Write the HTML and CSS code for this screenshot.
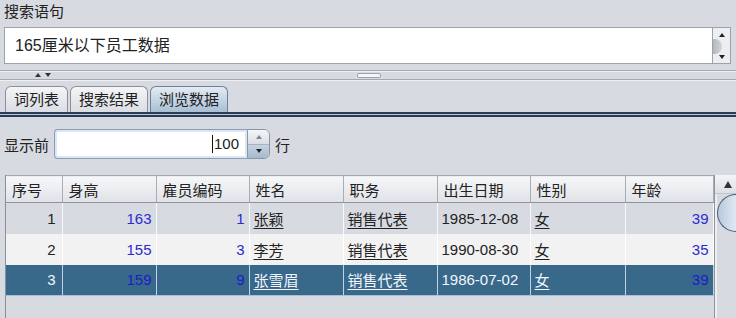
FILE: index.html
```html
<!DOCTYPE html>
<html lang="zh-CN">
<head>
  <meta charset="UTF-8">
  <title>浏览数据</title>
  <link rel="stylesheet" href="styles.css">
</head>
<body>
  <div class="app">
    <div class="field-label">搜索语句</div>
    <div class="query-box">
      <div class="query-text">165厘米以下员工数据</div>
      <div class="mini-scroll">
        <span class="tri up"></span>
        <span class="mini-thumb"></span>
        <span class="tri down"></span>
      </div>
    </div>

    <div class="splitter">
      <div class="split-bar">
        <div class="split-arrows"><span class="tri up"></span><span class="tri down"></span></div>
        <div class="grip"></div>
      </div>
    </div>

    <div class="tabs">
      <div class="tab">词列表</div>
      <div class="tab">搜索结果</div>
      <div class="tab active">浏览数据</div>
    </div>
    <div class="tab-rule"></div>

    <div class="limit-row">
      <span class="limit-label">显示前</span>
      <div class="spinner">
        <div class="spin-field"><span class="caret"></span>100</div>
        <div class="spin-btns">
          <span class="spin-btn"><span class="tri up"></span></span>
          <span class="spin-btn"><span class="tri down"></span></span>
        </div>
      </div>
      <span class="limit-unit">行</span>
    </div>

    <div class="grid-pane">
      <table class="grid">
        <colgroup>
          <col style="width:56px"><col style="width:94px"><col style="width:93px"><col style="width:94px">
          <col style="width:94px"><col style="width:93px"><col style="width:95px"><col style="width:88px">
        </colgroup>
        <thead>
          <tr><th>序号</th><th>身高</th><th>雇员编码</th><th>姓名</th><th>职务</th><th>出生日期</th><th>性别</th><th>年龄</th></tr>
        </thead>
        <tbody>
          <tr>
            <td class="num">1</td><td class="num blue">163</td><td class="num blue">1</td>
            <td><u>张颖</u></td><td><u>销售代表</u></td><td>1985-12-08</td><td><u>女</u></td><td class="num blue">39</td>
          </tr>
          <tr class="alt">
            <td class="num">2</td><td class="num blue">155</td><td class="num blue">3</td>
            <td><u>李芳</u></td><td><u>销售代表</u></td><td>1990-08-30</td><td><u>女</u></td><td class="num blue">35</td>
          </tr>
          <tr class="selected">
            <td class="num">3</td><td class="num blue">159</td><td class="num blue">9</td>
            <td><u>张雪眉</u></td><td><u>销售代表</u></td><td>1986-07-02</td><td><u>女</u></td><td class="num blue">39</td>
          </tr>
        </tbody>
      </table>
      <div class="vbar">
        <div class="vbar-up"><span class="tri up"></span></div>
        <div class="vbar-thumb"></div>
      </div>
    </div>
  </div>
</body>
</html>
```

FILE: styles.css
```css
:root {
  --panel:     #d7dae0;
  --line:      #9ea2a9;
  --text:      #222;
  --num-blue:  #2b2bd0;
  --sel:       #39698a;
  --navy:      #2b3b52;
}
html, body {
  margin: 0; padding: 0;
  width: 736px; height: 318px;
  overflow: hidden;
  background: var(--panel);
  color: var(--text);
  font-family: "Liberation Sans", "Noto Sans CJK SC", sans-serif;
  font-size: 15px;
}
.app { display: flex; flex-direction: column; height: 318px; }

/* small triangles */
.tri { display: block; width: 0; height: 0; border-left: 4px solid transparent; border-right: 4px solid transparent; }
.tri.up   { border-bottom: 5px solid #222; }
.tri.down { border-top: 5px solid #222; }

/* query */
.field-label { height: 27px; line-height: 24px; padding-left: 4px; }
.query-box {
  display: flex; height: 37px; box-sizing: border-box;
  margin: 0 5px 0 4px;
  border: 1px solid var(--line); background: #fff;
}
.query-text { flex: 1; padding-left: 10px; font-size: 16px; line-height: 35px; }
.mini-scroll {
  width: 17px; border-left: 1px solid var(--line);
  background: #eceef1;
  display: flex; flex-direction: column; align-items: center; justify-content: space-between;
  padding: 5px 0 4px;
}
.mini-scroll .tri { border-left-width: 3px; border-right-width: 3px; }
.mini-scroll .tri.up { border-bottom-width: 4px; }
.mini-scroll .tri.down { border-top-width: 4px; }
.mini-thumb {
  align-self: flex-start; width: 9px; height: 15px;
  background: linear-gradient(90deg, #b4b7bc, #d4d6da);
  border-radius: 0 7px 7px 0;
}

/* splitter */
.splitter { height: 20px; padding-top: 6px; box-sizing: border-box; }
.split-bar {
  height: 10px; box-sizing: border-box;
  border-top: 1px solid #a4a8af; border-bottom: 1px solid #a4a8af;
  box-shadow: 0 1px 0 #eef0f3, inset 0 1px 0 #eef0f3;
  display: flex; align-items: center;
}
.split-arrows { display: flex; gap: 4px; margin-left: 35px; }
.split-arrows .tri { border-left-width: 3px; border-right-width: 3px; }
.split-arrows .tri.up { border-bottom: 4px solid #333; }
.split-arrows .tri.down { border-top: 4px solid #333; }
.grip {
  width: 22px; height: 3px; margin-left: 306px;
  border: 1px solid #9da1a8; border-radius: 2px; background: #f4f5f7;
}

/* tabs */
.tabs { display: flex; gap: 2px; padding: 2px 0 0 5px; height: 28px; box-sizing: border-box; align-items: flex-end; }
.tab {
  height: 26px; box-sizing: border-box; padding: 0 8px;
  line-height: 25px;
  border: 1px solid #8b919b; border-bottom: none;
  border-radius: 6px 6px 0 0;
  background: linear-gradient(#f4f5f7, #dadde3);
}
.tab.active {
  border-color: #6f7f95;
  background: linear-gradient(#e3ebf3, #a9bfd4);
}
.tab-rule {
  height: 5px; box-sizing: border-box;
  border-top: 2px solid var(--navy); border-bottom: 2px solid var(--navy);
  background: #b8c8d8;
}

/* limit row */
.limit-row { display: flex; align-items: center; height: 30px; margin-top: 12px; padding-left: 4px; }
.limit-label { width: 50px; }
.spinner { display: flex; height: 30px; }
.spin-field {
  width: 193px; box-sizing: border-box; height: 30px;
  border: 1px solid #8a9bb4; border-right: none; border-radius: 4px 0 0 4px;
  background: #fff; box-shadow: inset 0 0 0 2px #dbe7f4;
  text-align: right; padding-right: 8px; line-height: 28px; font-size: 15px;
}
.caret { display: inline-block; width: 1px; height: 18px; background: #111; vertical-align: -4px; margin-right: 1px; }
.spin-btns {
  width: 23px; box-sizing: border-box; display: flex; flex-direction: column;
  border: 1px solid #8a97aa; border-radius: 0 6px 6px 0; overflow: hidden;
}
.spin-btn { flex: 1; display: flex; align-items: center; justify-content: center; }
.spin-btn:first-child { background: linear-gradient(#f5f6f8, #d9dde3); border-bottom: 1px solid #a9b2bf; }
.spin-btn:last-child { background: linear-gradient(#c6d3e1, #a6b8cc); }
.spin-btn .tri { border-left-width: 3px; border-right-width: 3px; }
.spin-btn .tri.up { border-bottom: 4px solid #7b8593; }
.spin-btn .tri.down { border-top: 4px solid #222; }
.limit-unit { margin-left: 5px; }

/* grid */
.grid-pane { display: flex; flex: 1; margin-top: 16px; margin-left: 5px; border-left: 1px solid #8a8f98; min-height: 0; }
.grid { width: 707px; table-layout: fixed; border-collapse: collapse; align-self: flex-start; }
.grid th {
  height: 27px; padding: 0 0 0 6px; box-sizing: border-box;
  text-align: left; font-weight: normal;
  background: linear-gradient(#f6f7f9, #dfe2e7);
  border-top: 1px solid #a3a7ae; border-bottom: 1px solid #8f949b; border-right: 1px solid #a9adb4;
}
.grid td {
  height: 31px; padding: 0 4px; box-sizing: border-box;
  border-right: 1px solid #f7f8fa; white-space: nowrap;
  background: var(--panel);
}
.grid td.num { text-align: right; padding-right: 4px; }
.grid td:first-child.num { padding-right: 6px; }
.grid td.blue { color: var(--num-blue); }
.grid tr.alt td { background: #f2f2f3; border-right-color: #fff; }
.grid tr.selected td { background: var(--sel); color: #f2f6fa; border-right-color: #c3d3e2; border-bottom: 1px solid #a8c0d6; }
.grid tr.selected td.blue { color: #1c1ccc; }
.grid u { text-underline-offset: 3px; }

.vbar { width: 23px; box-sizing: border-box; border-left: 1px solid #8f949b; box-shadow: inset 2px 0 0 #eceef1; }
.vbar-up {
  height: 18px; display: flex; justify-content: center; align-items: center;
  padding-left: 4px;
  border-bottom: 1px solid #c3c7cd;
  background: linear-gradient(#f3f4f6, #dcdfe4);
}
.vbar-up .tri { border-left-width: 4px; border-right-width: 4px; border-bottom: 7px solid #333; }
.vbar-thumb {
  margin: 0 0 0 2px; height: 38px; width: 22px; box-sizing: border-box;
  border: 1px solid #4d5c72; border-right: none;
  border-radius: 20px 0 0 20px;
  background: linear-gradient(90deg, #b7cade, #e6eef6);
}
```
